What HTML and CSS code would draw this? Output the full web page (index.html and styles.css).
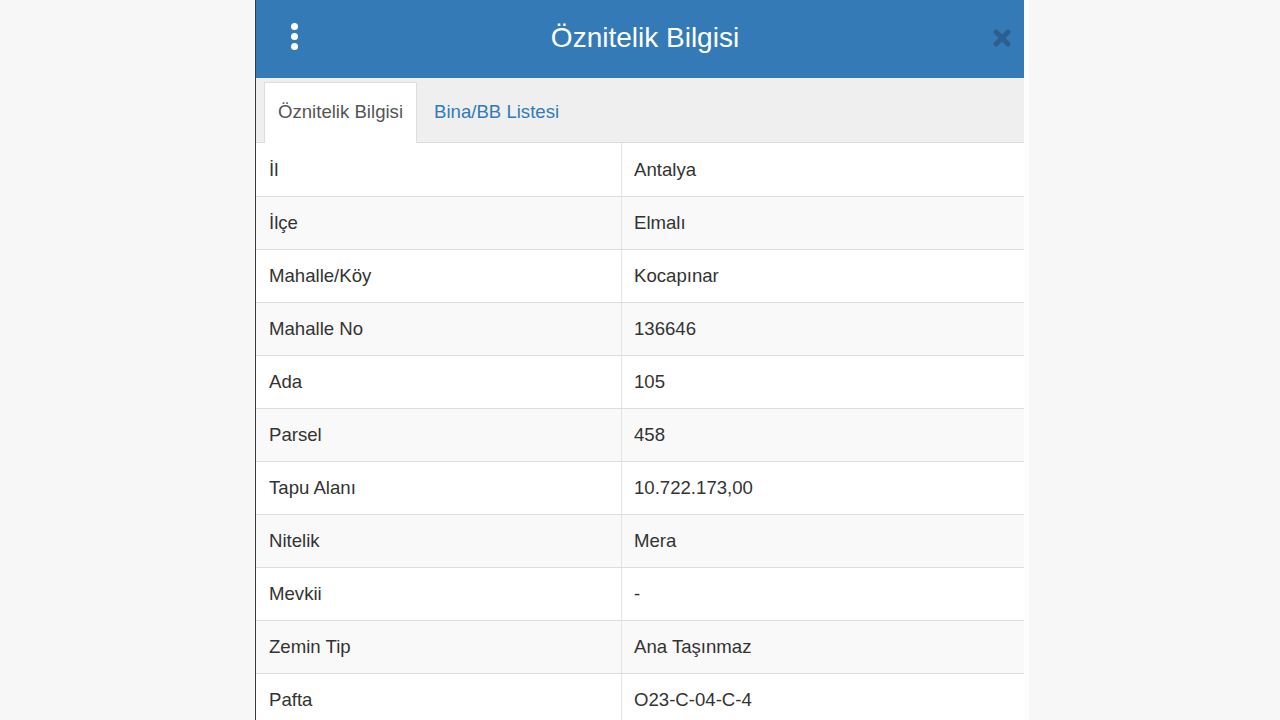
FILE: index.html
```html
<!DOCTYPE html>
<html lang="tr">

<head>
    <meta charset="UTF-8">
    <meta name="viewport" content="width=device-width, initial-scale=1.0">
    <title>Öznitelik Bilgisi</title>
    <link rel="stylesheet" href="styles.css">
</head>

<body>
    <div class="panel">
        <!-- baslik: menu, baslik metni, kapat -->
        <div class="panel-head">
            <span class="menu-btn">
                <i></i><i></i><i></i>
            </span>
            <h1 class="panel-title">Öznitelik Bilgisi</h1>
            <span class="close-btn">
                <svg width="20" height="20" viewBox="0 0 20 20">
                    <path d="M4 4 L16 16 M16 4 L4 16" stroke="currentColor" stroke-width="5" stroke-linecap="round" fill="none"/>
                </svg>
            </span>
        </div>

        <ul class="tabs">
            <li class="tab active">Öznitelik Bilgisi</li>
            <li class="tab">Bina/BB Listesi</li>
        </ul>

        <table class="attr-table">
            <tr><td>İl</td><td>Antalya</td></tr>
            <tr><td>İlçe</td><td>Elmalı</td></tr>
            <tr><td>Mahalle/Köy</td><td>Kocapınar</td></tr>
            <tr><td>Mahalle No</td><td>136646</td></tr>
            <tr><td>Ada</td><td>105</td></tr>
            <tr><td>Parsel</td><td>458</td></tr>
            <tr><td>Tapu Alanı</td><td>10.722.173,00</td></tr>
            <tr><td>Nitelik</td><td>Mera</td></tr>
            <tr><td>Mevkii</td><td>-</td></tr>
            <tr><td>Zemin Tip</td><td>Ana Taşınmaz</td></tr>
            <tr><td>Pafta</td><td>O23-C-04-C-4</td></tr>
        </table>
    </div>
</body>

</html>
```

FILE: styles.css
```css
html,
body {
    margin: 0;
    height: 100%;
    overflow: hidden;
}

body {
    background: #f7f7f7;
    font-family: "Liberation Sans", Arial, sans-serif;
    color: #333;
}

.panel {
    width: 768px;
    margin-left: calc(50% - 385px);
    min-height: 100%;
    background: #fff;
    border-left: 1px solid #3a3a3a;
    box-shadow: 5px 0 0 #fdfdfd;
}

.panel-head {
    height: 78px;
    background: #337ab7;
    display: flex;
    align-items: center;
    padding: 0 12px 0 34px;
    color: #fff;
}

.menu-btn {
    width: 8px;
    display: flex;
    flex-direction: column;
    align-items: center;
    gap: 3px;
    margin-top: -6px;
}

.menu-btn i {
    display: block;
    width: 7px;
    height: 7px;
    border-radius: 50%;
    background: #fff;
}

.panel-title {
    flex: 1;
    margin: 0 0 3px;
    text-align: center;
    font-size: 28px;
    font-weight: normal;
}

.close-btn {
    color: #2b5f8e;
    width: 20px;
    height: 20px;
    margin-bottom: 2px;
}

.close-btn svg {
    display: block;
}

.tabs {
    list-style: none;
    margin: 0;
    padding: 4px 0 0 8px;
    height: 60px;
    background: #efefef;
    border-bottom: 1px solid #dcdcdc;
    display: flex;
    align-items: flex-end;
}

.tab {
    height: 60px;
    box-sizing: border-box;
    line-height: 58px;
    padding: 0 13px;
    margin-right: 3px;
    font-size: 18.6px;
    color: #337ab7;
    border: 1px solid transparent;
    border-bottom: 0;
}

.tab.active {
    background: #fff;
    color: #555;
    border-color: #ddd;
    height: 61px;
    margin-bottom: -1px;
}

.attr-table {
    width: 100%;
    border-collapse: collapse;
    font-size: 18.6px;
}

.attr-table td {
    height: 52px;
    padding: 0 13px 0 12px;
    border-bottom: 1px solid #ddd;
    vertical-align: middle;
}

.attr-table tr:first-child td {
    height: 53px;
}

.attr-table td:first-child {
    width: 339px;
    padding-left: 13px;
    border-right: 1px solid #e3e3e3;
}

.attr-table tr:nth-child(even) td {
    background: #f9f9f9;
}
```
